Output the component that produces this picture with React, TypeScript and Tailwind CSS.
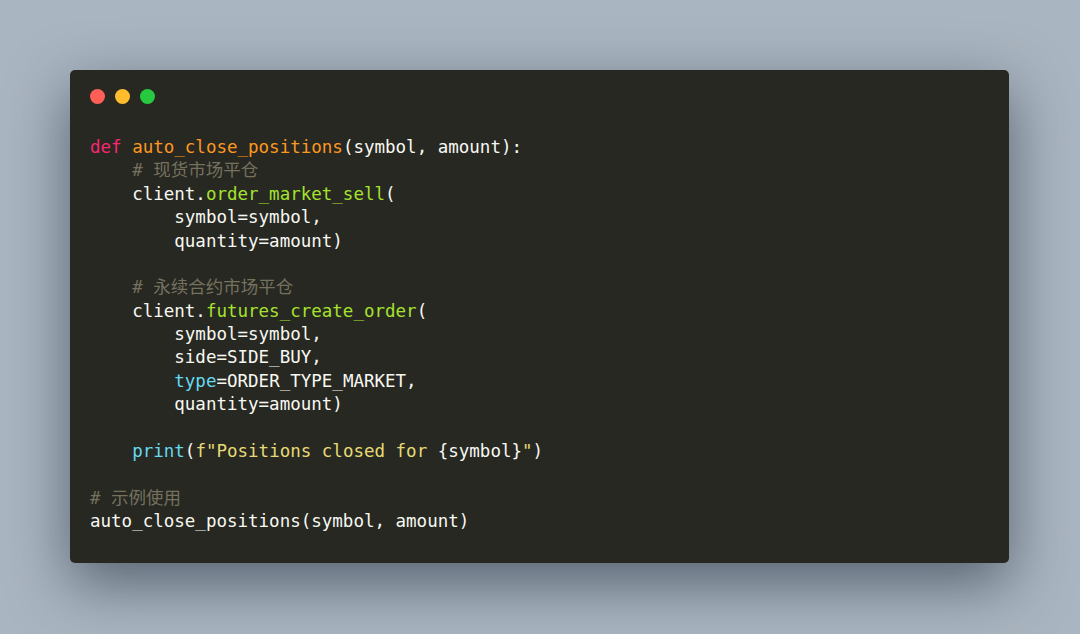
import React from "react";

type Tok = [string, string];

const W = "text-[#f8f8f2]";
const K = "text-[#f92672]";
const F = "text-[#fd971f]";
const C = "text-[#75715e]";
const G = "text-[#a6e22e]";
const B = "text-[#66d9ef]";
const Y = "text-[#e6db74]";

const lines: Tok[][] = [
  [[K, "def"], [W, " "], [F, "auto_close_positions"], [W, "(symbol, amount):"]],
  [[C, "    # 现货市场平仓"]],
  [[W, "    client."], [G, "order_market_sell"], [W, "("]],
  [[W, "        symbol=symbol,"]],
  [[W, "        quantity=amount)"]],
  [],
  [[C, "    # 永续合约市场平仓"]],
  [[W, "    client."], [G, "futures_create_order"], [W, "("]],
  [[W, "        symbol=symbol,"]],
  [[W, "        side=SIDE_BUY,"]],
  [[W, "        "], [B, "type"], [W, "=ORDER_TYPE_MARKET,"]],
  [[W, "        quantity=amount)"]],
  [],
  [[W, "    "], [B, "print"], [W, "("], [Y, 'f"Positions closed for '], [W, "{symbol}"], [Y, '"'], [W, ")"]],
  [],
  [[C, "# 示例使用"]],
  [[W, "auto_close_positions(symbol, amount)"]],
];

export default function App() {
  return (
    <div className="w-[1080px] h-[634px] bg-[#a9b5c0] pl-[70px] pt-[70px] overflow-hidden">
      <div className="w-[939px] h-[493px] bg-[#272822] rounded-[5px] shadow-[0_20px_60px_rgba(20,30,45,0.55)] px-5 pt-[19px]">
        <div className="flex gap-[10px]">
          <div className="w-[15px] h-[15px] rounded-full bg-[#ff5f56]" />
          <div className="w-[15px] h-[15px] rounded-full bg-[#ffbd2e]" />
          <div className="w-[15px] h-[15px] rounded-full bg-[#27c93f]" />
        </div>
        <pre
          className="mt-[32px] text-[17.5px] leading-[23.375px] whitespace-pre"
          style={{ fontFamily: '"DejaVu Sans Mono", "Noto Sans CJK SC", monospace' }}
        >
          {lines.map((l, i) => (
            <div key={i} className="h-[23.375px]">
              {l.map(([c, t], j) => (
                <span key={j} className={c}>
                  {t}
                </span>
              ))}
            </div>
          ))}
        </pre>
      </div>
    </div>
  );
}
